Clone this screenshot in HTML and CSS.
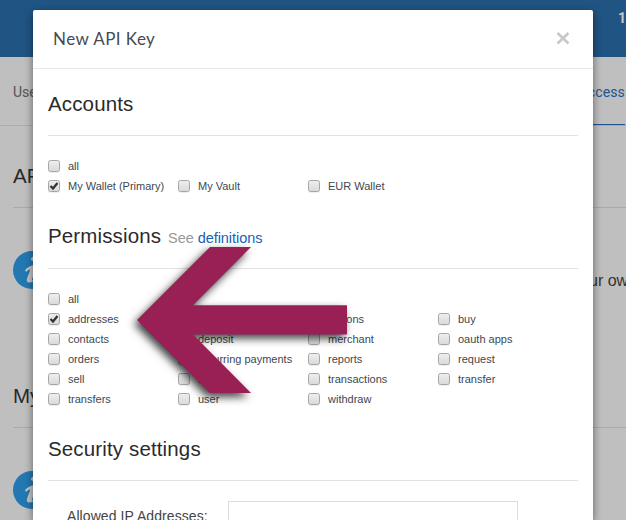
FILE: index.html
```html
<!DOCTYPE html>
<html lang="en">
<head>
<meta charset="utf-8">
<title>New API Key</title>
<link rel="stylesheet" href="styles.css">
</head>
<body>
<div class="page">
  <div class="topbar"><span>1</span></div>
  <div class="tabs"><span class="tab">User</span><span class="tab tab-active">API Access</span></div>
  <section class="panel panel-keys">
    <h2>API</h2>
    <div class="notice"><svg class="info" viewBox="0 0 38 38"><circle cx="19" cy="19" r="19"/><path d="M18 8c0-3 6-4 6-1 0 4-6 4-6 1zM12 19c3-3 8-6 10-4 2 3-3 12-3 14 0 1 2 0 4-1-2 3-8 5-9 2-1-2 3-9 3-11 0-1-2 0-4 2z"/></svg><span>your own</span></div>
  </section>
  <section class="panel">
    <h2>My</h2>
    <div class="notice"><svg class="info" viewBox="0 0 38 38"><circle cx="19" cy="19" r="19"/><path d="M18 8c0-3 6-4 6-1 0 4-6 4-6 1zM12 19c3-3 8-6 10-4 2 3-3 12-3 14 0 1 2 0 4-1-2 3-8 5-9 2-1-2 3-9 3-11 0-1-2 0-4 2z"/></svg></div>
  </section>
</div>
<div class="modal">
  <header class="modal-header"><h1>New API Key</h1>
    <svg class="close" viewBox="0 0 14 14"><path d="M1.500 2l11 10.500M12.500 2L1.500 12.500"/></svg></header>
  <main class="modal-body">
    <h2 class="accounts-title">Accounts</h2>
    <div class="options accounts">
      <label class="all"><i></i>all</label>
      <label><i><svg viewBox="0 0 10 10"><path d="M1.500 5L4 7.500L8.500 2"/></svg></i>My Wallet (Primary)</label><label><i></i>My Vault</label><label><i></i>EUR Wallet</label>
    </div>
    <h2 class="permissions-title">Permissions <small>See <a>definitions</a></small></h2>
    <div class="options permissions">
      <label class="all"><i></i>all</label>
      <label><i><svg viewBox="0 0 10 10"><path d="M1.500 5L4 7.500L8.500 2"/></svg></i>addresses</label><label><i></i>balance</label><label><i></i>buttons</label><label><i></i>buy</label>
      <label><i></i>contacts</label><label><i></i>deposit</label><label><i></i>merchant</label><label><i></i>oauth apps</label>
      <label><i></i>orders</label><label><i></i>recurring payments</label><label><i></i>reports</label><label><i></i>request</label>
      <label><i></i>sell</label><label><i></i>send</label><label><i></i>transactions</label><label><i></i>transfer</label>
      <label><i></i>transfers</label><label><i></i>user</label><label><i></i>withdraw</label>
    </div>
    <h2 class="security-title">Security settings</h2>
    <div class="field"><span>Allowed IP Addresses:</span><div class="input"></div></div>
  </main>
</div>
<svg class="arrow" viewBox="0 0 626 520"><path d="M137 320L210 247H251L193 305.3H347V334.5H193L251 393H210Z"/></svg>
</body>
</html>
```
FILE: styles.css
```css
* { box-sizing: border-box; }
html { overflow: hidden; }
body { margin: 0; width: 626px; height: 520px; overflow: hidden; position: relative; font-family: "Liberation Sans", Arial, sans-serif; }
h1, h2 { margin: 0; font-weight: 400; }
.page { width: 626px; height: 520px; overflow: hidden; background: #bfbfbf; }
.topbar { height: 57px; background: #205483; color: #c8c8c8; padding: 9px 0 0 618px; font: bold 14px/18px Roboto, sans-serif; }
.tabs { height: 69px; border-bottom: 1px solid #acacac; display: flex; justify-content: space-between; padding: 0 1px 0 13px; font: 14px/70px Roboto, sans-serif; color: #555; }
.tab-active { height: 68px; color: #205493; border-bottom: 1px solid #205493; letter-spacing: .15px; }
.panel { padding: 0 0 0 13px; height: 220px; }
.panel h2 { height: 82px; padding-top: 37px; font-size: 20.5px; line-height: 26px; border-bottom: 1px solid #aaa; color: #292929; }
.notice { display: flex; justify-content: space-between; padding-top: 43px; font-size: 16px; line-height: 60px; margin: 0 -11px 0 -.5px; color: #333; }
.info { width: 38px; height: 38px; fill: #c5c5c5; }
.info circle { fill: #2478b2; }
.modal { position: absolute; left: 33px; top: 10px; width: 560px; height: 510px; overflow: hidden; background: #fff; border-radius: 2px 2px 0 0; box-shadow: 0 3px 9px rgba(0,0,0,.5); }
.modal-header { height: 59px; border-bottom: 1px solid #e8e8e8; display: flex; justify-content: space-between; padding: 0 23px 0 20px; }
.modal-header h1 { font: 400 17px/57px Lato, sans-serif; letter-spacing: .45px; color: #454a55; }
.close { width: 14px; height: 14px; margin-top: 21px; fill: none; stroke: #c8c8c8; stroke-width: 2.7; }
.modal-body { padding: 0 15px; }
.modal-body h2 { border-bottom: 1px solid #e2e2e2; font-size: 20.5px; line-height: 24px; letter-spacing: .14px; color: #2b2b2b; }
.modal-body .accounts-title { height: 67px; padding-top: 23px; }
.modal-body .permissions-title { height: 73px; padding-top: 28px; }
.modal-body .security-title { height: 72px; padding-top: 28px; }
small { font-size: 14.5px; color: #999; letter-spacing: -.05px; margin-left: 1px; }
a { color: #1762b5; }
.options { display: grid; grid-template-columns: repeat(4, 130px); grid-auto-rows: 20px; font-size: 11px; line-height: 20px; color: #414750; white-space: nowrap; }
.options label { display: flex; align-items: center; }
.accounts { height: 40px; margin-top: 20px; }
.permissions { height: 120px; margin-top: 20px; }
.all { grid-column: 1 / -1; }
i { width: 12px; height: 12px; margin-right: 8px; border: 1px solid #a5a5a5; border-radius: 2.5px; background: linear-gradient(#eee, #dadada); box-shadow: 0 1px 1px #eee; }
i svg { display: block; width: 10px; height: 10px; fill: none; stroke: #333; stroke-width: 2.3; }
.field { display: flex; height: 51px; overflow: hidden; padding: 20px 0 0 19px; font-size: 14px; line-height: 30px; letter-spacing: .08px; color: #444; }
.field span { width: 161px; }
.input { width: 290px; height: 34px; border: 1px solid #ddd; }
.arrow { position: absolute; left: 0; top: 0; width: 626px; height: 520px; fill: #992055; filter: drop-shadow(-3px 4px 4px rgba(0,0,0,.75)); }
```
